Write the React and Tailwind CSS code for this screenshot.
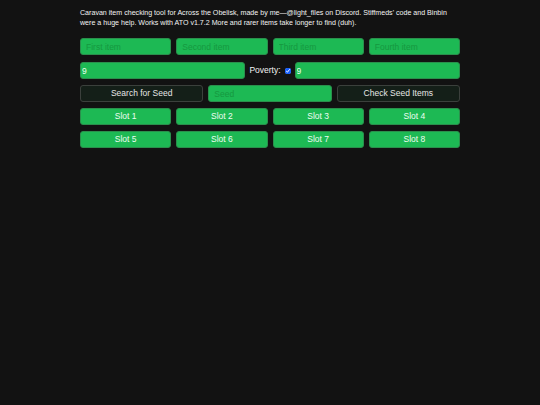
import React from "react";

const inputCls =
  "h-[17px] w-full min-w-0 rounded-[3px] border border-[#2a8f4c] bg-[#1db954] px-[5px] text-[8.5px] text-[#eaffef] placeholder:text-[#15983f] outline-none";

const numCls =
  "h-[17px] min-w-0 flex-1 rounded-[3px] border border-[#2a8f4c] bg-[#1db954] px-[1px] text-[8.5px] text-[#eaffef] outline-none";

const slotCls =
  "h-[17px] rounded-[3px] border border-[#2a8f4c] bg-[#1db954] text-[8.5px] text-[#eefdf2]";

const darkBtnCls =
  "h-[17px] rounded-[3px] border border-[#3b403c] bg-[#141f18] text-[8.5px] text-[#e6e6e6]";

const App = () => {
  const slots = [1, 2, 3, 4, 5, 6, 7, 8];

  return (
    <div
      className="min-h-[405px] w-full bg-[#121212] text-white"
      style={{ fontFamily: '"Liberation Sans", Arial, sans-serif' }}
    >
      <div className="mx-auto w-[380px] pt-[8px]">
        <p className="text-[7.1px] leading-[10px] text-[#f2f2f2]">
          Caravan item checking tool for Across the Obelisk, made by
          me—@light_files on Discord. Stiffmeds' code and Binbin were a huge
          help. Works with ATO v1.7.2 More and rarer items take longer to find
          (duh).
        </p>

        {/* item inputs */}
        <div className="mt-[10px] grid grid-cols-4 gap-[5px]">
          <input className={inputCls} placeholder="First item" />
          <input className={inputCls} placeholder="Second item" />
          <input className={inputCls} placeholder="Third item" />
          <input className={inputCls} placeholder="Fourth item" />
        </div>

        {/* level + poverty */}
        <div className="mt-[7px] flex items-center gap-[4px]">
          <input className={numCls} defaultValue="9" />
          <label className="text-[8.5px] text-[#f2f2f2]">Poverty:</label>
          <input
            type="checkbox"
            defaultChecked
            className="m-0 h-[6px] w-[6px] accent-blue-600"
          />
          <input className={numCls} defaultValue="9" />
        </div>

        {/* seed row */}
        <div className="mt-[6px] grid grid-cols-3 gap-[5px]">
          <button className={darkBtnCls}>Search for Seed</button>
          <input className={inputCls} placeholder="Seed" />
          <button className={darkBtnCls}>Check Seed Items</button>
        </div>

        {/* slots */}
        <div className="mt-[6px] grid grid-cols-4 gap-x-[5px] gap-y-[6px]">
          {slots.map((n) => (
            <button key={n} className={slotCls}>
              Slot {n}
            </button>
          ))}
        </div>
      </div>
    </div>
  );
};

export default App;
